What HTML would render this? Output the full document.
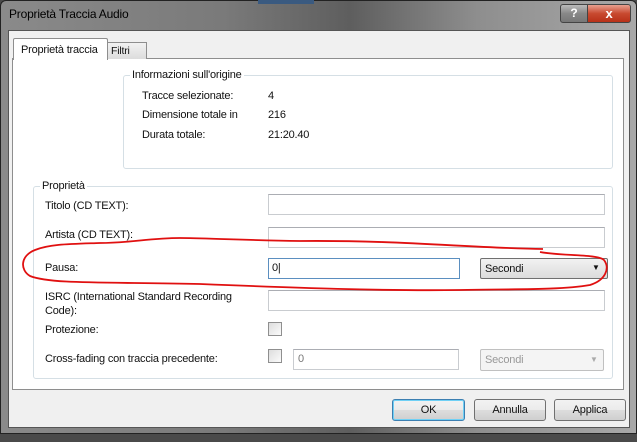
<!DOCTYPE html><html><head><style>
body{margin:0;width:637px;height:442px;overflow:hidden;background:#4a4a4a;font-family:"Liberation Sans",sans-serif;font-size:11px;letter-spacing:-0.2px;color:#111;position:relative}
.a{position:absolute}
.frame{left:0;top:0;width:635px;height:432px;border:1px solid #222;border-radius:6px 6px 0 0;background:linear-gradient(90deg,#8a8a8a 0,#7a7a7a 35%,#5e5e5e 55%,#8e8e8e 75%,#a8a8a8 100%)}
.client{left:8px;top:30px;width:620px;height:396px;background:#f0f0f0;border:1px solid #555}
.panel{left:12px;top:58px;width:610px;height:330px;background:#fff;border:1px solid #8e8e8e}
.grp{border:1px solid #d5dfe5;border-radius:3px}
.lg{background:#fff;padding:0 2px}
.in{background:#fff;border:1px solid #c9ccd0;border-top-color:#abadb3;height:19px}
.cb{width:12px;height:12px;border:1px solid #8f8f8f;background:linear-gradient(135deg,#ddd,#fbfbfb)}
.btn{height:20px;border:1px solid #707070;border-radius:3px;background:linear-gradient(#f2f2f2 0,#ebebeb 50%,#dddddd 51%,#cfcfcf 100%);text-align:center;line-height:20px}
</style></head><body>
<div class="a frame"></div>
<div class="a" style="left:258px;top:0;width:56px;height:4px;background:#3a5a80"></div>
<div class="a" style="left:9px;top:7px;font-size:12px;color:#000">Proprietà Traccia Audio</div>
<div class="a" style="left:560px;top:4px;width:26px;height:17px;border:1px solid #444;border-radius:3px 0 0 3px;background:linear-gradient(#bbb,#888 50%,#777);color:#fff;font-weight:bold;text-align:center;font-size:12px;line-height:17px">?</div>
<div class="a" style="left:587px;top:4px;width:42px;height:17px;border:1px solid #444;border-radius:0 3px 3px 0;background:linear-gradient(#e8a090,#c84a30 50%,#b83018);color:#fff;font-weight:bold;text-align:center;font-size:13px;line-height:17px">x</div>
<div class="a client"></div>
<div class="a panel"></div>
<div class="a" style="left:13px;top:38px;width:93px;height:21px;background:#fff;border:1px solid #8e8e8e;border-bottom:none;border-radius:2px 2px 0 0"></div>
<div class="a" style="left:21px;top:44px">Proprietà traccia</div>
<div class="a" style="left:107px;top:42px;width:38px;height:16px;background:linear-gradient(#f2f2f2,#dcdcdc);border:1px solid #8e8e8e;border-bottom:none"></div>
<div class="a" style="left:111px;top:45px;font-size:10.5px">Filtri</div>
<div class="a grp" style="left:123px;top:75px;width:488px;height:92px"></div>
<div class="a lg" style="left:130px;top:69px">Informazioni sull'origine</div>
<div class="a" style="left:142px;top:90px">Tracce selezionate:</div><div class="a" style="left:268px;top:90px">4</div>
<div class="a" style="left:142px;top:109px">Dimensione totale in</div><div class="a" style="left:268px;top:109px">216</div>
<div class="a" style="left:142px;top:129px">Durata totale:</div><div class="a" style="left:268px;top:129px">21:20.40</div>
<div class="a grp" style="left:33px;top:186px;width:578px;height:191px"></div>
<div class="a lg" style="left:40px;top:180px">Proprietà</div>
<div class="a" style="left:45px;top:200px">Titolo (CD TEXT):</div><div class="a in" style="left:268px;top:194px;width:335px"></div>
<div class="a" style="left:45px;top:229px">Artista (CD TEXT):</div><div class="a in" style="left:268px;top:227px;width:335px"></div>
<div class="a" style="left:45px;top:262px">Pausa:</div>
<div class="a in" style="left:268px;top:258px;width:190px;border-color:#5b8fc0"></div>
<div class="a" style="left:272px;top:262px">0|</div>
<div class="a" style="left:480px;top:258px;width:126px;height:19px;border:1px solid #707070;border-radius:2px;background:linear-gradient(#f2f2f2,#dcdcdc)"></div>
<div class="a" style="left:485px;top:263px">Secondi</div><div class="a" style="left:592px;top:263px;font-size:8px">▼</div>
<div class="a" style="left:45px;top:290px;line-height:14px">ISRC (International Standard Recording<br>Code):</div><div class="a in" style="left:268px;top:290px;width:335px"></div>
<div class="a" style="left:45px;top:324px">Protezione:</div><div class="a cb" style="left:268px;top:322px"></div>
<div class="a" style="left:45px;top:353px">Cross-fading con traccia precedente:</div><div class="a cb" style="left:268px;top:349px"></div>
<div class="a in" style="left:293px;top:349px;width:164px"></div><div class="a" style="left:298px;top:353px;color:#777">0</div>
<div class="a" style="left:480px;top:349px;width:122px;height:20px;border:1px solid #c0c0c0;border-radius:2px;background:#f4f4f4"></div>
<div class="a" style="left:485px;top:354px;color:#999">Secondi</div><div class="a" style="left:590px;top:355px;font-size:8px;color:#aaa">▼</div>
<div class="a btn" style="left:392px;top:399px;width:71px;border-color:#3c7fb1;box-shadow:inset 0 0 0 1px #6fd0f5">OK</div>
<div class="a btn" style="left:474px;top:399px;width:70px">Annulla</div>
<div class="a btn" style="left:554px;top:399px;width:70px">Applica</div>
<svg class="a" style="left:0;top:0" width="637" height="442"><g fill="none" stroke="#e01010" stroke-width="1.8" stroke-linejoin="round">
<path d="M543,249 C470,248 400,240 300,241 C240,240 200,238 180,238 C150,238 130,243 100,243 C70,244 50,244 35,250 C20,256 20,270 30,276 C50,284 100,282 200,284 C300,288 380,291 460,290 C520,289 560,290 590,285 C606,280 610,268 604,260 C598,254 560,256 540,252"/>
</g></svg>
</body></html>
